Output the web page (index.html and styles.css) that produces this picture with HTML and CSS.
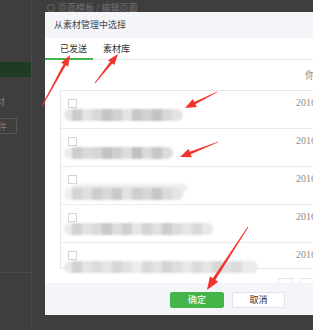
FILE: index.html
```html
<!DOCTYPE html>
<html lang="zh-CN">
<head>
    <meta charset="UTF-8">
    <meta name="viewport" content="width=device-width, initial-scale=1.0">
    <title>从素材管理中选择</title>
    <link rel="stylesheet" href="styles.css">
</head>
<body>
    <div class="page">
        <aside class="side">
            <div class="side-on"></div>
            <div class="side-text">素材</div>
            <div class="side-btn">上传文件</div>
            <div class="side-line"></div>
        </aside>
        <main class="main">
            <div class="crumb"><span class="back"></span>页面模板 / 编辑页面</div>
        </main>
    </div>

    <div class="dialog">
        <div class="dlg-head">从素材管理中选择</div>
        <div class="tabs">
            <div class="tab on">已发送</div>
            <div class="tab">素材库</div>
        </div>
        <div class="dlg-body">
            <div class="tool">你可以选择 1 条</div>
            <div class="list">
                <div class="row">
                    <div class="cell">
                        <span class="check"></span>
                        <div class="blur blur-a"></div>
                    </div>
                    <div class="date">2016-07-18</div>
                </div>
                <div class="row">
                    <div class="cell">
                        <span class="check"></span>
                        <div class="blur blur-b"></div>
                    </div>
                    <div class="date">2016-07-15</div>
                </div>
                <div class="row">
                    <div class="cell">
                        <span class="check"></span>
                        <div class="blur blur-c"></div>
                    </div>
                    <div class="date">2016-07-12</div>
                </div>
                <div class="row">
                    <div class="cell">
                        <span class="check"></span>
                        <div class="blur blur-d"></div>
                    </div>
                    <div class="date">2016-07-08</div>
                </div>
                <div class="row last">
                    <div class="cell">
                        <span class="check"></span>
                        <div class="blur blur-e"></div>
                    </div>
                    <div class="date">2016-07-05</div>
                </div>
            </div>
            <div class="pager">
                <span class="page-btn"></span>
                <span class="page-btn"></span>
            </div>
        </div>
        <div class="dlg-foot">
            <button class="btn btn-ok">确定</button>
            <button class="btn btn-cancel">取消</button>
        </div>
    </div>

    <!-- annotation arrows -->
    <svg class="marks" width="313" height="330" viewBox="0 0 313 330">
        <polygon points="42.35,106.19 65.85,65.28 68.22,66.57 70,55 61.20,62.73 63.57,64.02 41.65,105.81"/>
        <polygon points="95.31,83.25 112.19,63.43 114.31,65.10 118,54 108.03,60.14 110.15,61.81 94.69,82.75"/>
        <polygon points="216.82,91.64 194.26,101.92 192.83,99.06 185,108 196.85,107.10 195.42,104.24 217.18,92.36"/>
        <polygon points="217.85,141.63 189.75,151.75 188.58,148.77 180,157 191.88,157.15 190.71,154.17 218.15,142.37"/>
        <polygon points="247.66,226.78 212.83,278.29 209.90,276.38 207,290 218.28,281.84 215.35,279.93 248.34,227.22"/>
    </svg>
</body>
</html>
```

FILE: styles.css
```css
body {
    font-family: "Noto Sans CJK SC", "Liberation Sans", sans-serif;
    margin: 0;
    padding: 0;
    width: 313px;
    height: 330px;
    overflow: hidden;
    background-color: #3e3e3e;
    position: relative;
}

/* page behind the mask */
.page {
    display: flex;
    height: 330px;
}

.side {
    width: 31px;
    border-right: 1px solid #4a4a4a;
    display: flex;
    flex-direction: column;
    padding-top: 62px;
    overflow: hidden;
}

.side-on {
    height: 15px;
    background-color: #1e3b23;
}

.side-text {
    margin-top: 20px;
    margin-left: -13px;
    font-size: 9px;
    line-height: 10px;
    color: #7a7a7a;
    white-space: nowrap;
}

.side-btn {
    margin-top: 11px;
    margin-left: -31px;
    width: 48px;
    height: 16px;
    border: 1px solid #555;
    font-size: 9px;
    line-height: 16px;
    text-align: right;
    padding-right: 9px;
    box-sizing: border-box;
    color: #7a7a7a;
    white-space: nowrap;
}

.side-line {
    margin-top: 138px;
    height: 1px;
    background-color: #4c4c4c;
}

.main {
    flex: 1;
}

.crumb {
    display: flex;
    align-items: center;
    gap: 3px;
    padding: 3px 0 0 15px;
    font-size: 9px;
    line-height: 10px;
    color: #707070;
    white-space: nowrap;
}

.back {
    width: 6px;
    height: 6px;
    border: 1px solid #666;
    border-radius: 50%;
}

/* dialog */
.dialog {
    position: absolute;
    left: 45px;
    top: 12px;
    width: 365px;
    height: 303px;
    background-color: white;
    display: flex;
    flex-direction: column;
    overflow: hidden;
}

.dlg-head {
    height: 26px;
    background-color: #f4f5f9;
    padding-left: 9px;
    font-size: 9px;
    line-height: 26px;
    color: #444;
}

.tabs {
    display: flex;
    height: 22px;
    box-shadow: inset 0 -1px 0 #e7e7eb;
    font-size: 9px;
    color: #333;
}

.tab {
    height: 22px;
    line-height: 21px;
    box-sizing: border-box;
    margin-left: 10px;
}

.tab.on {
    margin-left: 0;
    padding: 0 6px 0 15px;
    border-bottom: 2px solid #44b549;
}

.dlg-body {
    flex: 1;
    padding: 0 15px;
    overflow: hidden;
}

.tool {
    height: 30px;
    padding-left: 245px;
    font-size: 10px;
    line-height: 30px;
    color: #888;
    white-space: nowrap;
}

.list {
    border: 1px solid #e7e7eb;
}

.row {
    display: grid;
    grid-template-columns: 232px 1fr;
    height: 37px;
    padding-left: 3px;
    border-bottom: 1px solid #ececef;
}

.row.last {
    height: 25px;
    border-bottom: none;
}

.cell {
    display: flex;
    flex-direction: column;
    align-items: flex-start;
}

.check {
    width: 7px;
    height: 7px;
    margin: 8px 0 0 4px;
    border: 1px solid #d4d4d4;
    background-color: white;
}

.blur {
    height: 12px;
    margin-top: 1px;
    border-radius: 6px;
    filter: blur(0.9px);
}

.blur-a {
    width: 119px;
    background: linear-gradient(90deg, #e6e6e6 0 8px, #cbcbcb 8px 18px, #e3e3e6 18px 28px, #d7d7d7 28px 38px, #c5c5c5 38px 48px, #d0d0d0 48px 58px, #e4e4e4 58px 68px, #c8c8c8 68px 78px, #d2d2d2 78px 88px, #c3c3c3 88px 98px, #d8d8d8 98px 108px, #e2e2e2 108px);
}

.blur-b {
    width: 109px;
    background: linear-gradient(90deg, #ececec 0 8px, #cdcdcd 8px 18px, #dadada 18px 28px, #d6d6d6 28px 38px, #c2c2c2 38px 48px, #cfcfcf 48px 58px, #dcdcdc 58px 68px, #c0c0c4 68px 78px, #d9d9d9 78px 88px, #c7c7c7 88px 98px, #dcdcdc 98px);
}

.blur-c {
    width: 119px;
    margin-top: 4px;
    box-shadow: 6px -6px 3px -2px #ececec;
    background: linear-gradient(90deg, #eeeeee 0 8px, #d4d4d4 8px 18px, #e0e0e0 18px 28px, #cdcdcd 28px 38px, #d9d9d9 38px 48px, #c9c9c9 48px 58px, #e2e2e2 58px 68px, #cecece 68px 78px, #d6d6d6 78px 88px, #c6c6c6 88px 98px, #dadada 98px 108px, #e4e4e4 108px);
}

.blur-d {
    width: 149px;
    background: linear-gradient(90deg, #eaeaea 0 8px, #d2d2d2 8px 18px, #e2e2e2 18px 28px, #dadada 28px 38px, #c8c8c8 38px 48px, #dedede 48px 58px, #d0d0d0 58px 68px, #e6e6e6 68px 78px, #d4d4d4 78px 88px, #e0e0e0 88px 98px, #cccccc 98px 108px, #dcdcdc 108px 118px, #e6e6e6 118px 128px, #d8d8d8 128px 138px, #e8e8e8 138px);
}

.blur-e {
    width: 194px;
    background: linear-gradient(90deg, #e8e8e8 0 8px, #d2d2d2 8px 18px, #e4e4e4 18px 28px, #dcdcdc 28px 38px, #e6e6e6 38px 48px, #d6d6d6 48px 58px, #e2e2e2 58px 68px, #ececec 68px 78px, #d8d8d8 78px 88px, #e4e4e4 88px 98px, #d4d4d4 98px 108px, #dedede 108px 118px, #e8e8e8 118px 128px, #dadada 128px 138px, #e4e4e4 138px 148px, #d6d6d6 148px 158px, #e2e2e2 158px 168px, #dcdcdc 168px 178px, #eaeaea 178px);
}

.date {
    padding-top: 7px;
    font-family: "Liberation Serif", serif;
    font-size: 10px;
    line-height: 10px;
    color: #8f8880;
    white-space: nowrap;
}

.pager {
    display: flex;
    gap: 7px;
    margin-top: 9px;
    padding-left: 218px;
}

.page-btn {
    width: 15px;
    height: 14px;
    border: 1px solid #e4e4e8;
    box-sizing: border-box;
}

.dlg-foot {
    height: 32px;
    background-color: #f4f5f9;
    display: flex;
    justify-content: center;
    align-items: flex-start;
    gap: 8px;
    padding-top: 9px;
    box-sizing: border-box;
}

.btn {
    height: 16px;
    padding: 0;
    font-family: inherit;
    font-size: 9px;
    line-height: 14px;
    border-radius: 2px;
    cursor: pointer;
}

.btn-ok {
    width: 54px;
    background-color: #44b549;
    border: 1px solid #44b549;
    color: white;
}

.btn-cancel {
    width: 53px;
    background-color: white;
    border: 1px solid #e4e4e8;
    color: #333;
}

/* red annotation arrows on top of everything */
.marks {
    position: absolute;
    left: 0;
    top: 0;
    pointer-events: none;
}

.marks polygon {
    fill: #f3342e;
}
```
